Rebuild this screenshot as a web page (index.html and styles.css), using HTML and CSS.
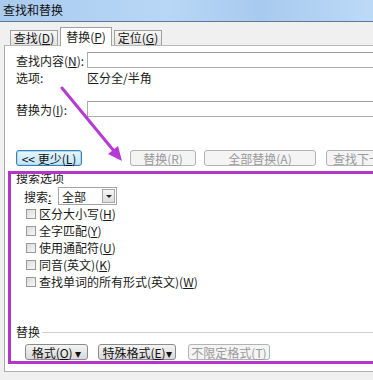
FILE: index.html
```html
<!DOCTYPE html>
<html lang="zh-CN">
<head>
  <meta charset="UTF-8">
  <title>查找和替换</title>
  <link rel="stylesheet" href="styles.css">
</head>
<body>
  <div class="pencere">
    <div class="baslik">查找和替换</div>

    <div class="sekmeler">
      <div class="sekme">查找(<u>D</u>)</div>
      <div class="sekme aktif">替换(<u>P</u>)</div>
      <div class="sekme">定位(<u>G</u>)</div>
    </div>

    <div class="panel">
      <div class="satir bul">
        <span class="etiket">查找内容(<u>N</u>):</span>
        <div class="kutu"></div>
      </div>
      <div class="satir secenek">
        <span class="etiket">选项:</span>
        <span>区分全/半角</span>
      </div>
      <div class="satir degistir">
        <span class="etiket">替换为(<u>I</u>):</span>
        <div class="kutu"></div>
      </div>

      <div class="dugmeler">
        <button class="dugme odak">&lt;&lt; 更少(<u>L</u>)</button>
        <button class="dugme pasif b-tek">替换(<u>R</u>)</button>
        <button class="dugme pasif b-tum">全部替换(<u>A</u>)</button>
        <button class="dugme pasif b-sonraki">查找下一处(<u>F</u>)</button>
      </div>

      <div class="grup-baslik">搜索选项</div>
      <div class="arama">
        <span class="arama-etiket">搜索<u>:</u></span>
        <div class="secim">
          <span class="secim-deger">全部</span>
          <span class="secim-ok"></span>
        </div>
      </div>

      <div class="liste">
        <label class="kutucuk"><span class="isaret"></span>区分大小写(<u>H</u>)</label>
        <label class="kutucuk"><span class="isaret"></span>全字匹配(<u>Y</u>)</label>
        <label class="kutucuk"><span class="isaret"></span>使用通配符(<u>U</u>)</label>
        <label class="kutucuk"><span class="isaret"></span>同音(英文)(<u>K</u>)</label>
        <label class="kutucuk"><span class="isaret"></span>查找单词的所有形式(英文)(<u>W</u>)</label>
      </div>

      <div class="ayrac">
        <span>替换</span>
        <div class="cizgi"></div>
      </div>
      <div class="alt-dugmeler">
        <button class="dugme b-bicim">格式(<u>O</u>) ▾</button>
        <button class="dugme b-ozel">特殊格式(<u>E</u>)▾</button>
        <button class="dugme pasif b-sinirsiz">不限定格式(<u>T</u>)</button>
      </div>
    </div>

    <div class="vurgu"></div>
    <svg class="ok" width="373" height="380" viewBox="0 0 373 380">
      <line x1="62" y1="88" x2="114" y2="151" stroke="#b53ad6" stroke-width="3" stroke-linecap="round"/>
      <polygon points="122,161 108,154 118,146" fill="#b53ad6"/>
    </svg>
  </div>
</body>
</html>
```

FILE: styles.css
```css
body {
  margin: 0;
  background: #f0f0f0;
  font-family: "Noto Sans CJK SC", "Noto Sans", sans-serif;
  font-size: 12px;
  color: #1a1a1a;
}

.pencere {
  position: relative;
  width: 373px;
  height: 380px;
  overflow: hidden;
}

.baslik {
  height: 21px;
  line-height: 19px;
  padding-left: 3px;
  font-size: 12px;
  color: #111;
  background: linear-gradient(to right, #a9cbef, #b8d7f6 45%, #a8caee 70%, #bcdaf8);
  border-bottom: 1px solid #5b7896;
}

.sekmeler {
  display: flex;
  align-items: flex-end;
  height: 23px;
  padding-left: 10px;
  background: #f0f0f0;
}

.sekme {
  box-sizing: border-box;
  width: 48px;
  height: 15px;
  line-height: 14px;
  text-align: center;
  border: 1px solid #a0a0a0;
  border-bottom: none;
  background: linear-gradient(#f8f8f8, #e3e3e3);
  margin-right: 2px;
}

.sekme.aktif {
  width: 52px;
  height: 19px;
  line-height: 18px;
  background: #fff;
  margin-bottom: -1px;
  position: relative;
  z-index: 1;
}

.panel {
  margin-left: 4px;
  height: 327px;
  box-sizing: border-box;
  background: #fff;
  border-top: 1px solid #b8b8b8;
  border-left: 1px solid #a8a8a8;
  border-bottom: 1px solid #b0b0b0;
  padding-left: 11px;
}

.satir {
  display: flex;
  align-items: center;
}

.etiket {
  width: 71px;
  flex-shrink: 0;
}

.kutu {
  box-sizing: border-box;
  width: 300px;
  height: 16px;
  border: 1px solid #abadb3;
  border-top-color: #9a9ca2;
  border-right: none;
  background: #fff;
}

.bul {
  margin-top: 6px;
  height: 16px;
}

.secenek {
  margin-top: 1px;
  height: 17px;
}

.degistir {
  margin-top: 15px;
  height: 16px;
}

.dugmeler {
  display: flex;
  margin-top: 33px;
  height: 16px;
  white-space: nowrap;
}

.dugme {
  box-sizing: border-box;
  height: 16px;
  padding: 0;
  font-family: inherit;
  font-size: 12px;
  line-height: 13px;
  color: #111;
  border: 1px solid #8a8a8a;
  border-radius: 3px;
  background: linear-gradient(#f4f4f4, #e6e6e6 50%, #dadada);
  flex-shrink: 0;
}

.dugme.odak {
  width: 66px;
  border-color: #3c7fb1;
  box-shadow: inset 0 0 0 1px #a8d8f4;
  background: linear-gradient(#eaf6fd, #d4ecfb 50%, #bee6fd);
}

.dugme.pasif {
  color: #9a9a9a;
  border-color: #b2b2b2;
  background: #f4f4f4;
}

.b-tek {
  width: 66px;
  margin-left: 48px;
}

.b-tum {
  width: 112px;
  margin-left: 8px;
}

.b-sonraki {
  width: 80px;
  margin-left: 10px;
  text-align: left;
  padding-left: 6px;
}

.grup-baslik {
  margin-top: 5px;
  line-height: 14px;
}

.arama {
  display: flex;
  align-items: center;
  margin-top: 2px;
  padding-left: 8px;
  height: 18px;
}

.arama-etiket {
  width: 34px;
}

.secim {
  box-sizing: border-box;
  width: 59px;
  height: 18px;
  border: 1px solid #a5a5a5;
  display: flex;
  align-items: center;
  justify-content: space-between;
  padding-left: 3px;
}

.secim-ok {
  box-sizing: border-box;
  width: 13px;
  height: 14px;
  margin-right: 1px;
  border: 1px solid #a8a8a8;
  background: linear-gradient(#f6f6f6, #dcdcdc);
  position: relative;
}

.secim-ok::after {
  content: "";
  position: absolute;
  left: 3px;
  top: 5px;
  border-left: 3px solid transparent;
  border-right: 3px solid transparent;
  border-top: 3px solid #222;
}

.liste {
  display: flex;
  flex-direction: column;
}

.kutucuk {
  display: flex;
  align-items: center;
  height: 17px;
  padding-left: 10px;
}

.isaret {
  box-sizing: border-box;
  width: 10px;
  height: 10px;
  margin-right: 3px;
  border: 1px solid #9a9a9a;
  background: linear-gradient(135deg, #dcdcdc, #f6f6f6);
}

.ayrac {
  display: flex;
  align-items: center;
  margin-top: 35px;
  line-height: 14px;
}

.cizgi {
  flex: 1;
  height: 1px;
  margin-left: 2px;
  background: #d0d0d0;
}

.alt-dugmeler {
  display: flex;
  margin-top: 5px;
  padding-left: 9px;
  white-space: nowrap;
}

.b-bicim {
  width: 63px;
}

.b-ozel {
  width: 78px;
  margin-left: 10px;
}

.b-sinirsiz {
  width: 82px;
  margin-left: 12px;
}

.vurgu {
  position: absolute;
  left: 8px;
  top: 171px;
  width: 370px;
  height: 193px;
  box-sizing: border-box;
  border: 3px solid #b436c8;
}

.ok {
  position: absolute;
  left: 0;
  top: 0;
  pointer-events: none;
}
```
